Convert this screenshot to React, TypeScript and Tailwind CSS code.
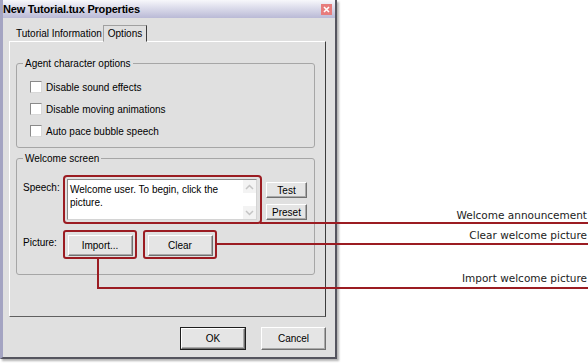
import React from "react";

const dlgFont = "font-['Liberation_Sans',Arial,sans-serif]";

function Btn({
  label,
  className = "",
  isDefault = false,
}: {
  label: string;
  className?: string;
  isDefault?: boolean;
}) {
  return (
    <div
      className={[
        "flex bg-[#e5e5e5] text-black",
        isDefault ? "border border-[#1e1e1e]" : "",
        className,
      ].join(" ")}
    >
      <div className="flex h-full w-full items-center justify-center border border-t-white border-l-white border-r-[#707070] border-b-[#707070] shadow-[inset_-1px_-1px_0_#a9a9a9]">
        {label}
      </div>
    </div>
  );
}

function CheckRow({ label }: { label: string }) {
  return (
    <div className="flex h-[22px] items-center">
      <div className="h-[12px] w-[12px] border border-t-[#8a8a8a] border-l-[#8a8a8a] border-r-[#d8d8d8] border-b-[#d8d8d8] bg-white" />
      <span className="ml-[4px]">{label}</span>
    </div>
  );
}

function Chevron({ up }: { up?: boolean }) {
  return (
    <svg width="9" height="6" viewBox="0 0 9 6">
      <path
        d={up ? "M1 5 L4.5 1.5 L8 5" : "M1 1 L4.5 4.5 L8 1"}
        fill="none"
        stroke="#c4c4c4"
        strokeWidth="1.5"
      />
    </svg>
  );
}

export default function App() {
  return (
    <div className="relative h-[363px] w-[588px] overflow-hidden bg-white">
      {/* Dialog window */}
      <div
        className={`flex h-[359px] w-[337px] flex-col border-l-[3px] border-r-2 border-b-2 border-l-[#a4a4c2] border-r-[#55555f] border-b-[#55555f] text-[10px] text-black shadow-[2px_2px_2px_rgba(0,0,0,0.3)] ${dlgFont}`}
      >
        {/* Title bar */}
        <div className="flex h-[18px] items-center justify-between bg-gradient-to-b from-[#f7f7fb] to-[#babad6] pr-[3px]">
          <span className="text-[11px] font-bold tracking-[-0.2px]">New Tutorial.tux Properties</span>
          <div className="flex h-[11px] w-[11px] items-center justify-center bg-[#e77c7c]">
            <svg width="7" height="7" viewBox="0 0 7 7">
              <path d="M1 1 L6 6 M6 1 L1 6" stroke="white" strokeWidth="1.6" />
            </svg>
          </div>
        </div>

        {/* Body */}
        <div className="flex flex-1 flex-col bg-[#e0e0e0] px-[6px]">
          {/* Tabs */}
          <div className="relative z-10 -mb-px flex h-[17px] pt-0 mt-[7px]">
            <div className="flex w-[94px] items-center pl-[7px]">Tutorial Information</div>
            <div className="flex w-[44px] items-center justify-center border border-[#a0a0a0] border-r-[#3c3c3c] border-b-[#e0e0e0] bg-[#e0e0e0]">
              Options
            </div>
          </div>

          {/* Tab panel */}
          <div className="flex h-[276px] w-[317px] flex-col border border-t-white border-l-white border-r-[#3c3c3c] border-b-[#606060] pl-[6px]">
            {/* Agent character options */}
            <fieldset className="mt-[15px] w-[299px] rounded-[3px] border border-[#a6a6a6] pb-[5px] pl-[13px]">
              <legend className="ml-[-7px] px-[2px] leading-[13px]">Agent character options</legend>
              <div className="flex flex-col pt-[6px]">
                <CheckRow label="Disable sound effects" />
                <CheckRow label="Disable moving animations" />
                <CheckRow label="Auto pace bubble speech" />
              </div>
            </fieldset>

            {/* Welcome screen */}
            <fieldset className="mt-[4px] w-[299px] rounded-[3px] border border-[#a6a6a6] pb-[15px] pl-[6px]">
              <legend className="ml-[0px] px-[2px] leading-[13px]">Welcome screen</legend>
              <div className="flex flex-col pt-[10px]">
                {/* Speech */}
                <div className="flex h-[49px]">
                  <div className="w-[40px] pt-[7px] leading-[12px]">Speech:</div>
                  <div className="flex h-[49px] w-[199px] rounded-[4px] border-2 border-[#9b1c22] pt-[2px] pb-[2px] pl-[2px] pr-[3px]">
                    <div className="flex flex-1 border border-t-[#8c8c8c] border-l-[#8c8c8c] border-r-[#d4d4d4] border-b-[#d4d4d4] bg-white">
                      <div className="flex-1 pl-[2px] pt-[3px] leading-[13px]">
                        Welcome user. To begin, click the picture.
                      </div>
                      <div className="flex w-[13px] flex-col bg-[#f3f3f3]">
                        <div className="flex h-[13px] items-center justify-center">
                          <Chevron up />
                        </div>
                        <div className="flex-1 bg-white" />
                        <div className="flex h-[13px] items-center justify-center">
                          <Chevron />
                        </div>
                      </div>
                    </div>
                  </div>
                  <div className="ml-[4px] flex flex-col gap-[6px] pt-[7px]">
                    <Btn label="Test" className="h-[16px] w-[41px]" />
                    <Btn label="Preset" className="h-[16px] w-[41px]" />
                  </div>
                </div>

                {/* Picture */}
                <div className="mt-[6px] flex h-[29px]">
                  <div className="w-[40px] pt-[7px] leading-[12px]">Picture:</div>
                  <div className="flex h-[29px] w-[74px] items-center justify-center rounded-[3px] border-2 border-[#9b1c22] pt-px">
                    <Btn label="Import..." className="h-[21px] w-[65px]" />
                  </div>
                  <div className="ml-[6px] flex h-[29px] w-[74px] items-center justify-center rounded-[3px] border-2 border-[#9b1c22] pt-px">
                    <Btn label="Clear" className="h-[21px] w-[65px]" />
                  </div>
                </div>
              </div>
            </fieldset>
          </div>

          {/* Dialog buttons */}
          <div className="mt-[10px] flex w-[317px] justify-end gap-[15px]">
            <Btn label="OK" isDefault className="h-[23px] w-[66px]" />
            <Btn label="Cancel" className="h-[23px] w-[65px]" />
          </div>
        </div>
      </div>

      {/* Callout lines */}
      <svg className="pointer-events-none absolute inset-0" width="588" height="363">
        <path d="M260 223 H588" stroke="#9b1c22" strokeWidth="2" fill="none" />
        <path d="M216 244 H588" stroke="#9b1c22" strokeWidth="2" fill="none" />
        <path d="M98 258 V288 H588" stroke="#9b1c22" strokeWidth="2" fill="none" />
      </svg>

      {/* Callout labels */}
      <div className="absolute right-[1px] top-[209px] font-['DejaVu_Sans',Verdana,sans-serif] text-[10.5px] leading-[13px] text-[#1c1c1c]">
        Welcome announcement
      </div>
      <div className="absolute right-[1px] top-[229px] font-['DejaVu_Sans',Verdana,sans-serif] text-[10.5px] leading-[13px] text-[#1c1c1c]">
        Clear welcome picture
      </div>
      <div className="absolute right-[1px] top-[272px] font-['DejaVu_Sans',Verdana,sans-serif] text-[10.5px] leading-[13px] text-[#1c1c1c]">
        Import welcome picture
      </div>
    </div>
  );
}
